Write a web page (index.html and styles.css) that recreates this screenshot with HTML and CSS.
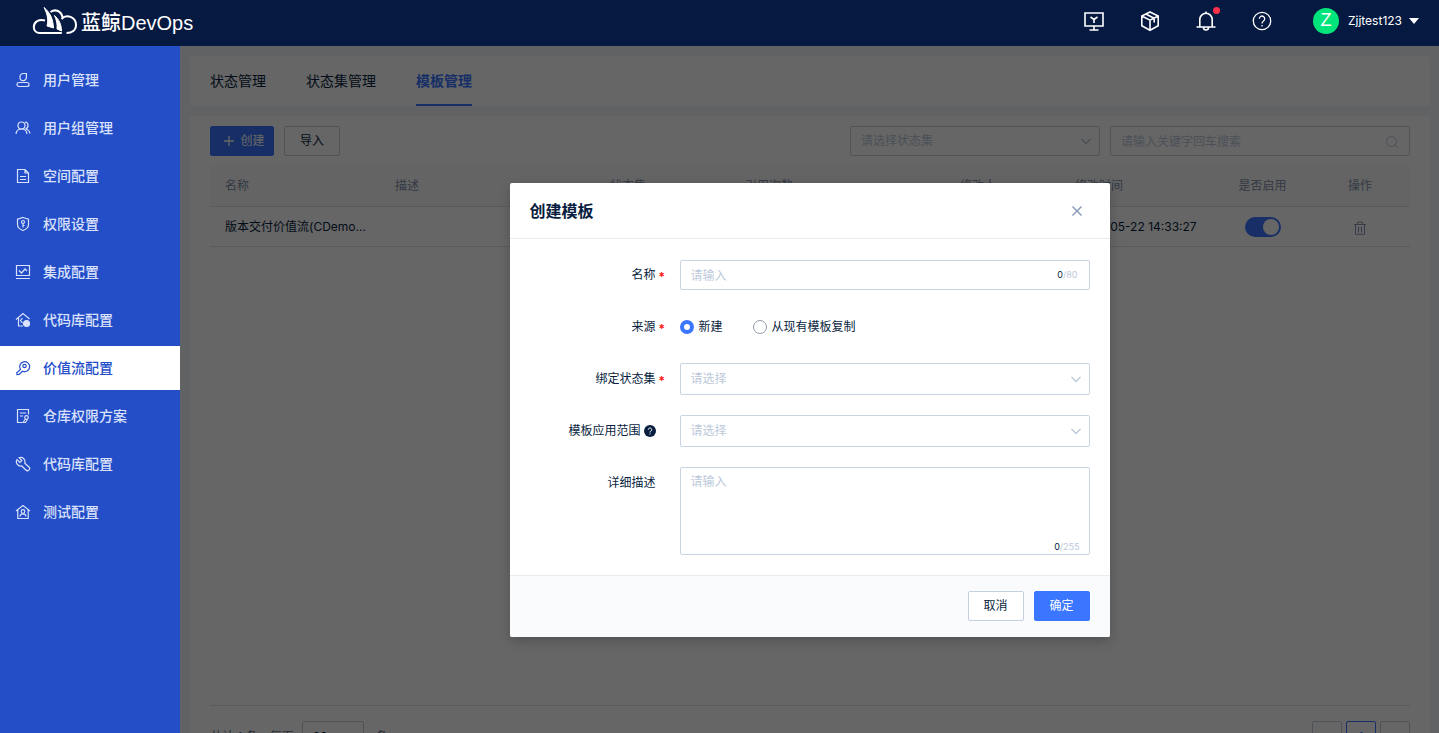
FILE: index.html
```html
<!DOCTYPE html>
<html lang="zh-CN">
<head>
<meta charset="utf-8">
<meta name="viewport" content="width=device-width, initial-scale=1">
<title>蓝鲸DevOps</title>
<link rel="stylesheet" href="styles.css">
</head>
<body>
<header class="topbar">
  <a class="brand" href="#">
    <svg class="brand-mark" viewBox="0 0 46 28" aria-hidden="true">
      <path d="M13 13.500C7 11.500 1.800 15 1.800 20c0 3.500 2.500 6 6 6h22" fill="none" stroke="#fff" stroke-width="2"/>
      <path d="M12 .5c6 5 9 11 9.500 20.500l-6.500-2c1.500-6 .5-12-3-18.500z" fill="#fff"/>
      <path d="M22.500 8.500c4.500 4 7 9 7 15.500l-4.500-2c.5-5-.5-9-2.500-13.500z" fill="#fff"/>
      <path d="M18.500 5c5-3.500 11-1 12 5.500" fill="none" stroke="#fff" stroke-width="2"/>
      <path d="M29.500 12c5-5.500 14.500-2 14.500 6 0 5-4 8-9.500 8" fill="none" stroke="#fff" stroke-width="2"/>
    </svg>
    <span class="brand-name">蓝鲸DevOps</span>
  </a>
  <nav class="tools" aria-label="工具">
    <button class="tool" aria-label="控制台"><svg viewBox="0 0 22 22"><path d="M2 3h18v13H2zM11 16v3.500M6.500 20h9M7.500 7l3.500 2.500L14.500 7M11 9.500V13"/></svg></button>
    <button class="tool" aria-label="产品"><svg viewBox="0 0 22 22"><path d="M11 2l8.200 4v9.800L11 20.300l-8.200-4.500V6zM2.800 6L11 10.200 19.200 6M11 10.200v10M6.800 4l8.400 4.200v4.300"/></svg></button>
    <button class="tool" aria-label="通知"><svg viewBox="0 0 22 22"><path d="M4.800 17V9.500a6.200 6.200 0 0 1 12.400 0V17M1.500 17h19M8.500 17.500a2.500 2.500 0 0 0 5 0M11 1.500v2"/></svg><span class="dot"></span></button>
    <button class="tool tool-thin" aria-label="帮助"><svg viewBox="0 0 22 22"><circle cx="11" cy="11" r="8.700"/><path d="M8.300 8.800a2.700 2.700 0 1 1 4.200 2.200c-1 .7-1.500 1.200-1.500 2.500M11 15v1.500"/></svg></button>
  </nav>
  <button class="account">
    <span class="avatar">Z</span><span>Zjjtest123</span><span class="caret"></span>
  </button>
</header>
<div class="shell">
  <nav class="sidebar" aria-label="主导航">
    <a href="#"><svg viewBox="0 0 16 16"><path d="M11 1.500H8.200A3.200 3.200 0 0 0 5 4.700v.8a3.200 3.200 0 0 0 6.400 0V1.500zM4 10.500h8a2 2 0 0 1 0 4H4a2 2 0 0 1 0-4z"/></svg>用户管理</a>
    <a href="#"><svg viewBox="0 0 16 16"><circle cx="6.500" cy="5.500" r="3.500"/><path d="M1 14c.3-3.200 2.500-5 5.500-5s5.200 1.800 5.500 5M10 2c4 .2 4 6 .5 7 2.500.5 4 2 4.500 4.500"/></svg>用户组管理</a>
    <a href="#"><svg viewBox="0 0 16 16"><path d="M2.500 1.500h7.500l3.500 3.500v9.500h-11zM10 1.500V5h3.500M5 8.500h6M5 11.500h6"/></svg>空间配置</a>
    <a href="#"><svg viewBox="0 0 16 16"><path d="M8 1.500l5.500 1.800v5.200c0 3-2.200 4.800-5.500 6-3.300-1.200-5.500-3-5.500-6V3.300z"/><circle cx="8" cy="6" r="1.500"/><path d="M8 7.500v4M8 9.500h1.500"/></svg>权限设置</a>
    <a href="#"><svg viewBox="0 0 16 16"><path d="M1.500 1.500h13v10h-13zM1 14.500h14M4 6.500l2.500 2.500L10 5l2 2"/></svg>集成配置</a>
    <a href="#"><svg viewBox="0 0 16 16"><path d="M1 7.500L8 1.500l6.500 5.500M3.500 6v8H8M7.500 6l-2 2.500 2 2.500"/><circle cx="11.500" cy="11.500" r="3" fill="currentColor"/></svg>代码库配置</a>
    <a href="#" class="current" aria-current="page"><svg viewBox="0 0 16 16"><path d="M5.500 9.500a5 5 0 1 1 2 1.700l-3.500 3.300-2 .2-.2-2z"/><circle cx="9.500" cy="6" r="1.700"/></svg>价值流配置</a>
    <a href="#"><svg viewBox="0 0 16 16"><path d="M13.500 6.500v-5h-11v13H7M5 5h6M5 8h3"/><circle cx="11.500" cy="9.500" r="1.800"/><path d="M10.500 11L8 14.500h2.500l2-3"/></svg>仓库权限方案</a>
    <a href="#"><svg viewBox="0 0 16 16"><path d="M4 1.700l2.800 2.800-1.900 1.900L2 3.600C.2 6.500 2.500 10.600 6.800 10l4 4a2 2 0 0 0 3.200-3L9.800 7.200C10.800 3.200 7.500.4 4 1.700z"/></svg>代码库配置</a>
    <a href="#"><svg viewBox="0 0 16 16"><path d="M1 7l7-5.500L15 7M2.800 6v8.500h10.400V6"/><circle cx="8" cy="7.500" r="1.800"/><path d="M5 12.500c.3-1.800 1.500-2.700 3-2.700s2.700.9 3 2.700"/></svg>测试配置</a>
  </nav>
  <main class="main">
    <nav class="card tabs" aria-label="价值流配置">
      <a href="#">状态管理</a><a href="#">状态集管理</a><a href="#" class="current">模板管理</a>
    </nav>
    <section class="card panel">
      <div class="toolbar">
        <button class="btn primary create"><svg viewBox="0 0 12 12" aria-hidden="true"><path d="M6 1v10M1 6h10"/></svg>创建</button>
        <button class="btn">导入</button>
        <span class="field filter"><select aria-label="状态集"><option>请选择状态集</option></select><svg class="chevron" viewBox="0 0 12 12"><path d="M1.500 4L6 8.500 10.500 4"/></svg></span>
        <span class="field search"><input type="text" placeholder="请输入关键字回车搜索" aria-label="搜索"><svg class="lens" viewBox="0 0 14 14"><circle cx="6.500" cy="6.500" r="5"/><path d="M10.200 10.200L13 13"/></svg></span>
      </div>
      <table class="grid">
        <colgroup><col class="c-name"><col class="c-desc"><col class="c-set"><col class="c-desc"><col class="c-user"><col class="c-time"><col class="c-on"><col class="c-act"></colgroup>
        <thead><tr><th>名称</th><th>描述</th><th>状态集</th><th>引用次数</th><th>修改人</th><th>修改时间</th><th class="mid">是否启用</th><th class="mid">操作</th></tr></thead>
        <tbody><tr><td>版本交付价值流(CDemo...</td><td></td><td></td><td></td><td></td><td>2023-05-22 14:33:27</td>
          <td class="mid"><input class="switch" type="checkbox" checked aria-label="是否启用"></td>
          <td class="mid"><button class="icon-btn" aria-label="删除"><svg viewBox="0 0 14 14"><path d="M1 3.500h12M4.500 3.500V1.200h5v2.300M2.500 3.500v9.800h9V3.500M5.500 5.500v6M8.500 5.500v6"/></svg></button></td></tr></tbody>
      </table>
      <footer class="pager">
        <span>共计 1 条，每页</span>
        <select class="page-size" aria-label="每页条数"><option>20</option></select>
        <span>条</span>
        <span class="pages"><button aria-label="上一页">‹</button><button class="current">1</button><button aria-label="下一页">›</button></span>
      </footer>
    </section>
    <div class="mask">
      <form class="dialog" role="dialog" aria-labelledby="dialog-title">
        <div class="dialog-head">
          <h2 id="dialog-title">创建模板</h2>
          <button type="button" class="icon-btn close" aria-label="关闭"><svg viewBox="0 0 14 14"><path d="M2.500 2.500l9 9M11.500 2.500l-9 9"/></svg></button>
        </div>
        <div class="dialog-body">
          <div class="row"><label class="label required" for="name">名称</label>
            <span class="field"><input id="name" type="text" placeholder="请输入"><span class="count"><b>0</b>/80</span></span></div>
          <div class="row"><span class="label required" id="source">来源</span>
            <div class="radios" role="radiogroup" aria-labelledby="source">
              <label><input type="radio" name="source" checked>新建</label>
              <label><input type="radio" name="source">从现有模板复制</label>
            </div></div>
          <div class="row"><label class="label required" for="states">绑定状态集</label>
            <span class="field tall"><select id="states"><option>请选择</option></select><svg class="chevron" viewBox="0 0 12 12"><path d="M1.500 4L6 8.500 10.500 4"/></svg></span></div>
          <div class="row"><label class="label" for="scope">模板应用范围<svg class="tip" viewBox="0 0 12 12" aria-hidden="true"><circle cx="6" cy="6" r="6"/><path d="M4.300 4.700a1.700 1.700 0 1 1 2.600 1.400c-.7.400-.9.700-.9 1.400M6 8.500v1"/></svg></label>
            <span class="field tall"><select id="scope"><option>请选择</option></select><svg class="chevron" viewBox="0 0 12 12"><path d="M1.500 4L6 8.500 10.500 4"/></svg></span></div>
          <div class="row top"><label class="label" for="detail">详细描述</label>
            <span class="field area"><textarea id="detail" placeholder="请输入"></textarea><span class="count"><b>0</b>/255</span></span></div>
        </div>
        <div class="dialog-foot"><button type="button" class="btn">取消</button><button type="button" class="btn primary">确定</button></div>
      </form>
    </div>
  </main>
</div>
</body>
</html>
```
FILE: styles.css
```css
*, ::before, ::after { box-sizing: border-box; }
body {
  margin: 0;
  height: 100vh;
  display: flex;
  flex-direction: column;
  overflow: hidden;
  font: 12px/20px Inter, "Noto Sans CJK SC", sans-serif;
  color: #081e40;
}
a { color: inherit; text-decoration: none; }
button, input, select, textarea { font: inherit; color: inherit; margin: 0; }
button { cursor: pointer; padding: 0; border: 0; background: none; }
svg { fill: none; stroke: currentColor; display: block; flex: none; }

.topbar {
  flex: none;
  height: 46px;
  padding: 0 20px 4px 32px;
  display: flex;
  align-items: center;
  background: #061941;
  color: #fff;
}
.brand { display: flex; align-items: center; gap: 3px; margin-right: auto; }
.brand-mark { width: 46px; height: 28px; }
.brand-name { padding-top: 3px; font: 500 20px/24px "Liberation Sans", "Noto Sans CJK SC", sans-serif; }
.tools { display: flex; gap: 34px; }
.tool { position: relative; }
.tool svg { width: 22px; height: 22px; stroke-width: 1.6; }
.tool.tool-thin svg { stroke-width: 1.3; }
.dot {
  position: absolute;
  top: -3px;
  right: -3px;
  width: 7px;
  height: 7px;
  border-radius: 50%;
  background: #ff3049;
}
.account { display: flex; align-items: center; margin-left: 40px; gap: 9px; color: #fff; }
.account .caret { margin-left: -2px; border: 5px solid transparent; border-top: 6px solid #fff; border-bottom: 0; }
.avatar {
  width: 26px;
  height: 26px;
  border-radius: 50%;
  background: #00e57b;
  font: 18px/24px "Liberation Sans", sans-serif;
}

.shell { flex: 1; min-height: 0; display: flex; }
.sidebar {
  flex: none;
  width: 180px;
  padding-top: 12px;
  display: flex;
  flex-direction: column;
  gap: 4px;
  background: #244dc8;
  color: #d9e2fa;
  font-size: 14px;
  font-weight: 500;
}
.sidebar a { height: 44px; padding-left: 15px; display: flex; align-items: center; gap: 12px; }
.sidebar svg { width: 16px; height: 16px; stroke-width: 1.2; }
.sidebar .current { background: #fff; color: #244dc8; }

.main {
  position: relative;
  flex: 1;
  min-width: 0;
  padding: 10px 9px 0 10px;
  display: flex;
  flex-direction: column;
  gap: 10px;
  overflow: hidden;
  background: #f0f5fa;
}
.card { background: #fff; border-radius: 2px; }
.tabs { flex: none; height: 50px; padding: 0 20px; display: flex; gap: 40px; font-size: 14px; line-height: 50px; }
.tabs .current { color: #3a76ff; font-weight: 600; border-bottom: 2px solid #3a76ff; }
.panel { flex: 1 0 auto; min-height: 659px; padding: 10px 20px; display: flex; flex-direction: column; }
.toolbar { display: flex; gap: 10px; margin-bottom: 10px; }
.btn {
  height: 30px;
  width: 56px;
  border: 1px solid #c4d0e0;
  border-radius: 2px;
  background: #fff;
}
.btn.primary { background: #3a76ff; border-color: #3a76ff; color: #fff; }
.btn.create { width: 64px; display: flex; align-items: center; justify-content: center; gap: 5px; padding-left: 4px; }
.create svg { width: 12px; height: 12px; stroke-width: 1.3; }

.field { position: relative; display: block; flex: 1; height: 30px; }
.field.tall { height: 32px; }
.field input, .field select, .field textarea {
  display: block;
  width: 100%;
  height: 100%;
  padding: 0 10px;
  border: 1px solid #c9d4e2;
  border-radius: 2px;
  background: #fff;
  outline: 0;
  appearance: none;
}
.field select, .field ::placeholder { color: #bcc9da; opacity: 1; }
.chevron, .lens { position: absolute; top: 50%; color: #bcc9da; pointer-events: none; }
.chevron { right: 8px; width: 12px; height: 12px; margin-top: -6px; stroke-width: 1.3; }
.lens { right: 11px; width: 14px; height: 14px; margin-top: -6px; }
.filter { flex: none; width: 250px; margin-left: auto; }
.search { flex: none; width: 300px; }

.grid { width: 100%; table-layout: fixed; border-collapse: collapse; }
.c-name { width: 170px; }
.c-desc { width: 215px; }
.c-set { width: 135px; }
.c-user { width: 115px; }
.c-time { width: 155px; }
.c-on { width: 95px; }
.c-act { width: 100px; }
.grid th, .grid td { height: 40px; padding: 1px 15px 0; text-align: left; white-space: nowrap; border-bottom: 1px solid #dde4eb; }
.grid td { padding-top: 2px; }
.grid th { background: #fafbfd; color: #8091a8; font-weight: 400; }
.grid .mid { text-align: center; padding-left: 0; padding-right: 0; }
.switch {
  appearance: none;
  display: block;
  width: 36px;
  height: 20px;
  margin: 0 auto;
  padding: 2px;
  border-radius: 10px;
  background: #3a76ff;
}
.switch::before { content: ""; display: block; width: 16px; height: 16px; margin-left: auto; border-radius: 50%; background: #fff; }
.icon-btn { color: #8498b3; vertical-align: middle; }
.icon-btn svg { width: 14px; height: 14px; }
.close svg { stroke-width: 1.4; }

.pager { margin-top: auto; border-top: 1px solid #dde4eb; padding: 15px 0 12px; display: flex; align-items: center; color: #63728a; }
.page-size { appearance: none; width: 62px; height: 32px; margin: 0 12px 0 8px; padding: 0 10px; border: 1px solid #c4d0e0; border-radius: 2px; background: #fff; color: #081e40; }
.pages { margin-left: auto; display: flex; gap: 4px; }
.pages button { width: 30px; height: 32px; border: 1px solid #c4d0e0; border-radius: 2px; color: #8498b3; }
.pages .current { border-color: #3a76ff; color: #3a76ff; }

.mask {
  position: absolute;
  inset: 0;
  padding-top: 137px;
  display: flex;
  justify-content: center;
  align-items: flex-start;
  background: rgba(0, 0, 0, .6);
}
.dialog { width: 600px; background: #fff; border-radius: 2px; box-shadow: 0 4px 12px rgba(0, 0, 0, .2); overflow: hidden; }
.dialog-head { height: 56px; padding: 0 26px 0 20px; display: flex; align-items: center; justify-content: space-between; border-bottom: 1px solid #e8ecf1; }
.dialog-head h2 { margin: 0; font-size: 16px; line-height: 24px; font-weight: 600; }
.dialog-body { padding: 20px; display: flex; flex-direction: column; gap: 20px; }
.row { display: flex; align-items: center; min-height: 32px; }
.row.top { align-items: flex-start; }
.label { width: 150px; padding-right: 24px; display: flex; align-items: center; justify-content: flex-end; line-height: 32px; }
.label.required { padding-right: 16px; }
.required::after { content: "*"; width: 8px; padding-left: 3px; color: #ff0d0d; font-weight: 600; line-height: 12px; height: 8px; }
.tip { width: 12px; height: 12px; margin-left: 3px; fill: #081e40; stroke: none; }
.tip path { fill: none; stroke: #fff; }
.field .count { position: absolute; right: 12px; top: 5px; font-size: 9px; color: #bcc9da; }
.count b { font-weight: 400; color: #081e40; }
.field.area { height: 88px; }
.field.area textarea { padding: 4px 10px; resize: none; }
.area .count { top: auto; right: 10px; bottom: -2px; }
.radios { display: flex; gap: 30px; }
.radios label { display: flex; align-items: center; gap: 5px; }
.radios input { appearance: none; width: 14px; height: 14px; border: 1px solid #9299ab; border-radius: 50%; background: #fff; }
.radios input:checked { border: 4px solid #3a76ff; }
.dialog-foot { padding: 15px 20px; display: flex; justify-content: flex-end; gap: 10px; background: #fafbfd; border-top: 1px solid #e8ecf1; height: 62px; }
```
